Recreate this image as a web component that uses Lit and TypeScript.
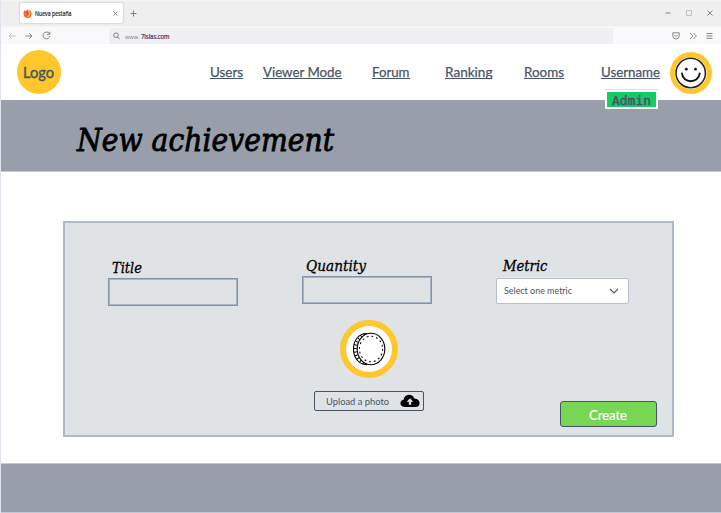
import { LitElement, html, css, svg } from "lit";
import { customElement, property } from "lit/decorators.js";

/** A single line of text set to an exact width, on a given baseline. */
@customElement("fit-text")
export class FitText extends LitElement {
  @property() text = "";
  @property({ type: Number }) width = 50;
  @property({ type: Number }) height = 20;
  @property({ type: Number }) baseline = 15;
  static styles = css`
    :host { display: block; flex: none; }
    svg { display: block; overflow: visible; }
    text { fill: currentColor; stroke: currentColor; stroke-width: var(--weight, 0); }
  `;
  render() {
    return html`<svg width=${this.width} height=${this.height}>
      ${svg`<text x="0" y=${this.baseline} textLength=${this.width} lengthAdjust="spacingAndGlyphs">${this.text}</text>`}
    </svg>`;
  }
}

const fit = (text: string, width: number, height: number, baseline: number, cls = "") =>
  html`<fit-text class=${cls} .text=${text} .width=${width} .height=${height} .baseline=${baseline}></fit-text>`;

@customElement("browser-bar")
export class BrowserBar extends LitElement {
  static styles = css`
    :host { display: block; height: 44px; margin-left: -1px; font-family: "Open Sans", sans-serif; color: #222; }
    .tabs { height: 26px; box-sizing: border-box; border-top: 1px solid #f4f4f4; background: #efefef; display: flex; padding-left: 20px; }
    .tab { width: 103px; height: 20px; margin-top: 2px; box-sizing: border-box; background: #fff; border-radius: 2px; box-shadow: 0 0 2px #aaa; display: flex; align-items: center; padding: 0 5px 0 3px; }
    .name { font-size: 6.6px; margin-left: 3px; --weight: 0.2px; }
    .grow { flex: 1; }
    .plus { margin: 9px 0 0 7px; }
    .window { display: flex; gap: 15px; margin: 8px 8px 0 0; }
    .tools { height: 18px; background: #f9f9fb; display: flex; align-items: center; border-top: 1px solid #f4f4f6; box-sizing: border-box; }
    .back { margin-left: 8px; }
    .fwd { margin-left: 9px; }
    .reload { margin-left: 9px; }
    .url { width: 504px; height: 16px; align-self: flex-end; margin-left: 58px; background: #f0eff4; display: flex; align-items: center; font-size: 7px; box-sizing: border-box; padding-left: 4px; color: #777; }
    .site { margin-left: 5px; display: flex; gap: 1px; }
    .www { font-size: 6px; }
    .host { color: #39245c; --weight: 0.2px; }
    .actions { display: flex; gap: 9px; margin-right: 8px; align-items: center; }
    svg { display: block; flex: none; fill: none; stroke: #777; stroke-width: 0.9; }
    .fox { stroke: none; }
    .faint { stroke: #bbb; }
  `;
  render() {
    return html`
      <div class="tabs">
        <div class="tab">
          <svg class="fox" width="9" height="9" viewBox="0 0 9 9">
            <path fill="#ff503c" d="M.6 3 1.500 1.200l1 1L5 .2l.7 1.200L7 1.300c1.500 1 1.800 3 1.500 4.400A4 4 0 0 1 .7 6z" />
            <path fill="#ffbd35" d="M5 .2c.4 1.800 2.800 1.800 2.600 4.700C7.400 7.300 5 8.400 3 7.500 5 7.400 6 6 5 4.600z" />
            <circle cx="4.2" cy="4.5" r="1.5" fill="#9b3fb4" />
            <path fill="#ff6a2f" d="M1 3.200c1-.6 2-.5 2.800.2L5 4l-1.800.8c.2 1 1.300 1.300 2.400.7C4.500 7.800 1.800 7 1 5z" />
          </svg>
          ${fit("Nueva pestaña", 36.5, 10, 7.5, "name")}
          <span class="grow"></span>
          <svg width="5" height="5"><path d="M.5.5l4 4m0-4l-4 4" /></svg>
        </div>
        <svg class="plus" width="7" height="7"><path d="M3.500.5v6m-3-3h6" /></svg>
        <span class="grow"></span>
        <div class="window">
          <svg width="6" height="7"><path d="M.5 4h5" /></svg>
          <svg class="faint" width="6" height="7"><path d="M.5 1.500h5v5h-5z" /></svg>
          <svg width="6" height="7"><path d="M.5 1.500l5 5m0-5l-5 5" /></svg>
        </div>
      </div>
      <div class="tools">
        <svg class="back faint" width="8" height="8"><path d="M7.500 4H1m3-3L1 4l3 3" /></svg>
        <svg class="fwd" width="8" height="8"><path d="M.5 4H7M4 1l3 3-3 3" /></svg>
        <svg class="reload" width="9" height="9"><path d="M7 2.200A3.400 3.400 0 1 0 7.800 5M7.800.7v2.600H5" /></svg>
        <div class="url">
          <svg width="7" height="8"><circle cx="3" cy="3.2" r="2.3" /><path d="M4.700 5l2 2.300" /></svg>
          <div class="site">${fit("www.", 14.5, 10, 8, "www")}${fit("7islas.com", 28.5, 10, 8, "host")}</div>
        </div>
        <span class="grow"></span>
        <div class="actions">
          <svg width="8" height="8"><path d="M.8.8h6.400v3a3.200 3.200 0 0 1-6.400 0zM2.400 3l1.600 1.600L5.600 3" /></svg>
          <svg width="8" height="8"><path d="M1 1l3 3-3 3M4.400 1l3 3-3 3" /></svg>
          <svg width="7" height="8"><path d="M.5 1.500h6m-6 2.400h6m-6 2.400h6" /></svg>
        </div>
      </div>
    `;
  }
}

const NAV: [string, number, number][] = [
  ["Users", 33, 0],
  ["Viewer Mode", 78.5, 20],
  ["Forum", 37.5, 30.5],
  ["Ranking", 47.5, 35],
  ["Rooms", 40, 31.5],
  ["Username", 59, 37],
];

@customElement("app-root")
export class AppRoot extends LitElement {
  static styles = css`
    :host { display: block; width: 721px; height: 513px; box-sizing: border-box; border-left: 1px solid #dfe3ec; background: #fff; font-family: Lato, sans-serif; color: #485465; overflow: hidden; }
    header { height: 56px; display: flex; position: relative; }
    .logo { width: 44px; height: 44px; margin: 6px 0 0 15.5px; border-radius: 50%; background: #ffc72c; display: flex; justify-content: center; font-size: 15px; --weight: 0.4px; }
    nav { display: flex; margin: 20px 0 0 149.5px; font-size: 14px; --weight: 0.25px; }
    .link { border-bottom: 1px solid #485465; height: 14px; }
    .face { margin: 8px 0 0 10px; display: block; flex: none; }
    .badge { position: absolute; left: 604px; top: 46px; width: 53px; height: 19px; box-sizing: border-box; border: 2px solid #fff; border-top: 0; border-bottom-width: 2px; background: #14cc66; box-shadow: inset 0 2px #fff; padding: 2px 0 0 5px; font-family: "DejaVu Sans Mono", monospace; font-size: 12px; --weight: 0.5px; color: #485465; }
    .badge::before { content: ""; position: absolute; left: -2px; right: -2px; top: -1px; height: 1px; background: #b9f0d1; }
    .band { height: 72px; box-sizing: border-box; background: #989faa; border-bottom: 1px solid #c3c9d4; padding: 17px 0 0 75.5px; color: #000; font: italic 32px "DejaVu Serif", serif; --weight: 0.9px; }
    .card { width: 611px; height: 216px; margin: 49px 0 0 62px; box-sizing: border-box; border: 2px solid #b0bac7; background: #dfe3e6; padding: 33px 0 0 43px; display: flex; flex-direction: column; }
    .fields { display: flex; height: 64px; }
    .label { color: #000; font: italic 14px "DejaVu Serif", serif; --weight: 0.3px; }
    .title { margin-top: 2px; }
    .quantity { margin-left: 64px; }
    .metric { margin-left: 64px; }
    .title .label, .quantity .label { margin-left: 4px; }
    .metric .label { margin-left: 7px; }
    .input { width: 130px; height: 28px; box-sizing: border-box; border: 2px solid #a9b4c2; outline: 1px solid #8293a8; outline-offset: -1px; }
    .select { width: 133px; height: 26px; margin-top: 2px; box-sizing: border-box; border: 1px solid #b4c0d2; border-radius: 2px; background: #fff; display: flex; justify-content: space-between; align-items: center; padding: 0 9px 0 7px; font-size: 10px; }
    .coin { display: block; margin: 0 0 0 232px; flex: none; }
    .actions { display: flex; margin: 13px 0 0 206px; }
    .upload { width: 110px; height: 20px; flex: none; box-sizing: border-box; border: 1px solid #485465; border-radius: 2px; display: flex; align-items: center; padding: 0 3px 0 11px; justify-content: space-between; font-size: 10px; }
    .create { width: 97px; height: 26px; flex: none; box-sizing: border-box; margin: 10px 0 0 136px; border: 1px solid #485465; border-radius: 3px; background: #78d655; color: #fff; display: flex; justify-content: center; font-size: 14px; --weight: 0.2px; }
    .create fit-text { margin-right: 1px; }
    footer { margin-top: 26px; height: 50px; box-sizing: border-box; background: #989faa; border: 1px solid #c3c9d4; border-width: 1px 0; }
  `;
  render() {
    return html`
      <browser-bar></browser-bar>
      <header>
        <div class="logo">${fit("Logo", 31, 44, 27.5)}</div>
        <nav>
          ${NAV.map(([t, w, gap]) => html`<div class="link" style="margin-left:${gap}px">${fit(t, w, 14, 13)}</div>`)}
        </nav>
        <svg class="face" width="42" height="42" viewBox="0 0 42 42">
          <circle cx="21" cy="21" r="21" fill="#ffc72c" />
          <circle cx="20.7" cy="21" r="16" fill="#fff" />
          <circle cx="20.7" cy="21" r="14.7" fill="#fff" stroke="#222" stroke-width="1.5" />
          <circle cx="16.3" cy="17.2" r="1.4" fill="#111" /><circle cx="25.5" cy="17.2" r="1.4" fill="#111" />
          <path d="M12 21.500c1 10.400 16.500 10.400 17.700 0" fill="none" stroke="#111" stroke-width="1.9" stroke-linecap="round" />
        </svg>
        <div class="badge">${fit("Admin", 39, 17, 13)}</div>
      </header>
      <div class="band">${fit("New achievement", 257, 45, 34)}</div>
      <div class="card">
        <div class="fields">
          <div class="title">
            ${fit("Title", 30, 20, 15, "label")}
            <div class="input"></div>
          </div>
          <div class="quantity">
            ${fit("Quantity", 60, 20, 15, "label")}
            <div class="input"></div>
          </div>
          <div class="metric">
            ${fit("Metric", 44.5, 20, 15, "label")}
            <div class="select">
              ${fit("Select one metric", 68, 12, 9)}
              <svg width="10" height="6"><path d="M1 .8l4 4 4-4" fill="none" stroke="#485465" stroke-width="1.2" /></svg>
            </div>
          </div>
        </div>
        <svg class="coin" width="58" height="58" viewBox="0 0 58 58">
          <circle cx="29" cy="29" r="26" fill="#fff" stroke="#ffc72c" stroke-width="6" />
          <g fill="none" stroke="#000" stroke-width="1.100">
            <path d="M27 13.500C18 13.500 13.500 21 13.500 29S18 44.500 27 44.700" />
            <path d="M25 14.500c-7 3-9.800 9-9.800 14.500s2.800 11.500 9.800 15" stroke-width="3" stroke-dasharray="1 2.500" />
            <ellipse cx="31" cy="29" rx="13.800" ry="15.700" fill="#fff" />
            <ellipse cx="31" cy="29" rx="11.600" ry="12.800" stroke-dasharray="1.800 3" />
          </g>
        </svg>
        <div class="actions">
          <div class="upload">
            ${fit("Upload a photo", 63, 12, 9.5)}
            <svg width="20" height="14" viewBox="0 0 20 14">
              <path d="M4.700 13C-.8 13-.8 6.400 3.600 5.800 4.500-.4 12.700-.7 14.300 4.600 21.200 4.800 21 13 15.500 13z" fill="#000" />
              <path d="M10 4.300l3.400 3.500h-2.200v3H8.800v-3H6.600z" fill="#dfe3e6" />
            </svg>
          </div>
          <div class="create">${fit("Create", 38, 24, 17.5)}</div>
        </div>
      </div>
      <footer></footer>
    `;
  }
}
